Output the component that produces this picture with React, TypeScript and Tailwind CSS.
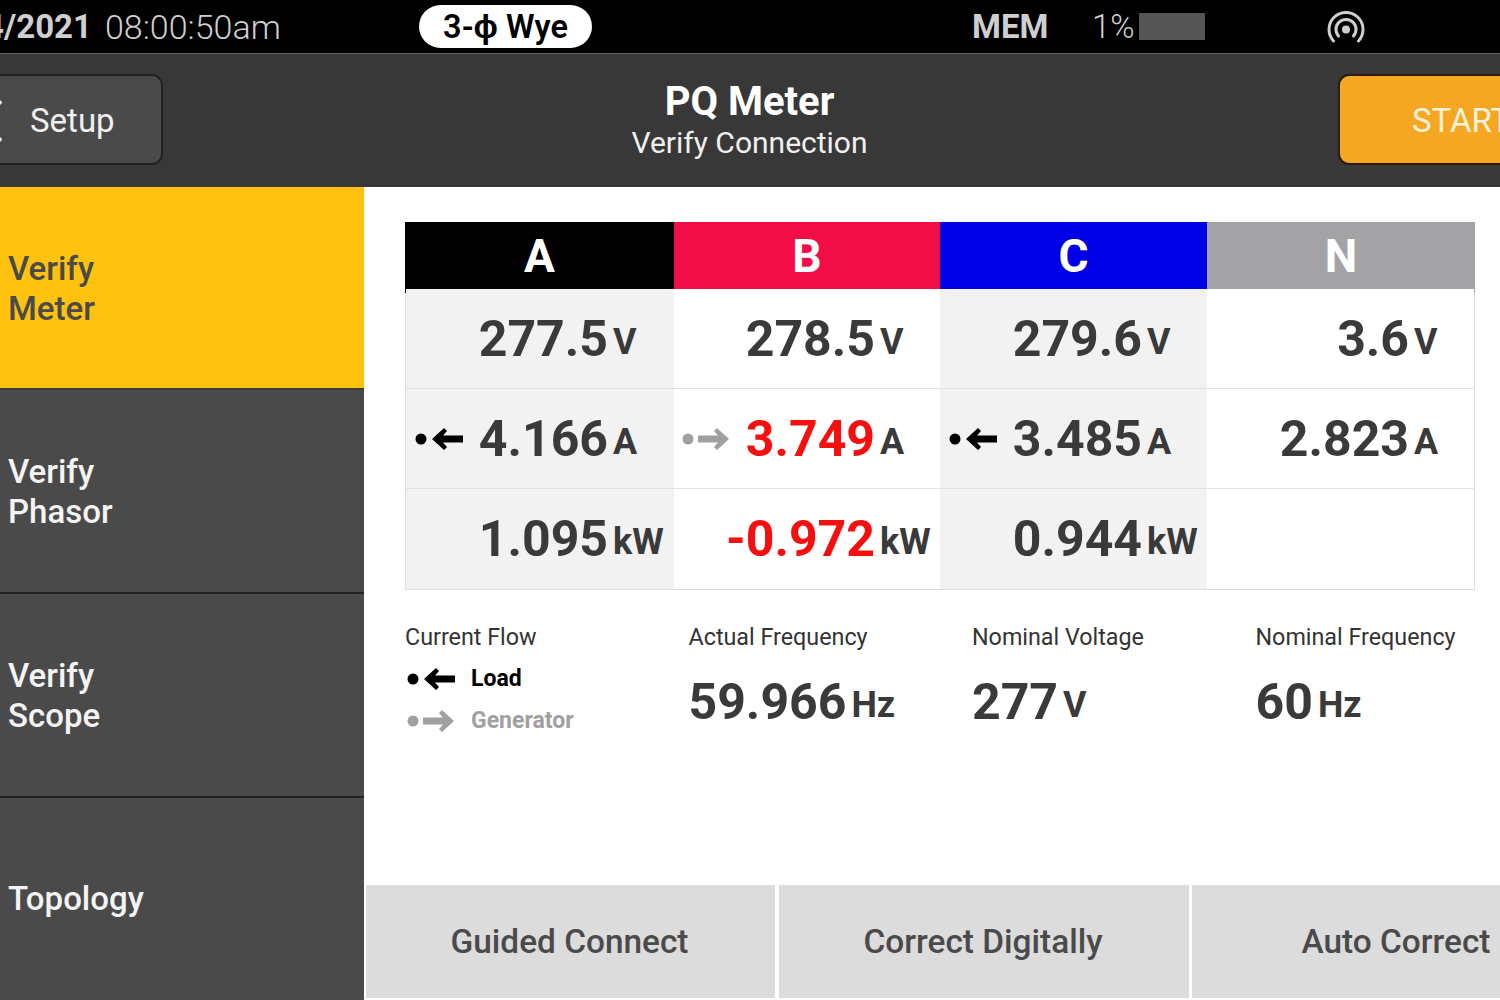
const font = { fontFamily: 'Roboto, sans-serif' }

function Flow({ dir, className = '' }: { dir: 'load' | 'gen'; className?: string }) {
  return (
    <svg viewBox="0 0 48 24" className={`w-[48px] h-[24px] ${className}`} fill="currentColor">
      {dir === 'load' ? (
        <>
          <circle cx="6" cy="12" r="5.5" />
          <path d="M17 12 L29 1 L32 4 L28 8.5 H48 V15.5 H28 L32 20 L29 23 Z" />
        </>
      ) : (
        <>
          <circle cx="6" cy="12" r="5.5" />
          <path d="M47 12 L35 1 L32 4 L36 8.5 H16 V15.5 H36 L32 20 L35 23 Z" />
        </>
      )}
    </svg>
  )
}

function Cell({ value, unit, shade, red, flow, narrow }: { value?: string; unit?: string; shade?: boolean; red?: boolean; flow?: 'load' | 'gen'; narrow?: boolean }) {
  return (
    <div className={`flex items-center h-full ${shade ? 'bg-[#f2f2f2]' : 'bg-white'}`}>
      <div className={`${narrow ? 'w-[201px] pl-[8px]' : 'w-[202px] pl-[9px]'} shrink-0 flex items-center justify-between`}>
        {flow ? <Flow dir={flow} className={flow === 'load' ? 'text-black' : 'text-[#a0a0a0]'} /> : <span />}
        <span className={`text-[50px] leading-none font-bold ${red ? 'text-[#f50f0f]' : 'text-[#3a3a3a]'}`}>{value}</span>
      </div>
      <span className="ml-[5px] mt-[6px] text-[36px] leading-none font-bold text-[#3a3a3a]">{unit}</span>
    </div>
  )
}

function Stat({ label, value, unit }: { label: string; value: string; unit: string }) {
  return (
    <div>
      <div className="text-[23.3px] leading-[28px] text-[#333]">{label}</div>
      <div className="flex items-center mt-[26px]">
        <span className="text-[50px] leading-[50px] font-bold text-[#3a3a3a]">{value}</span>
        <span className="ml-[5px] mt-[6px] text-[36px] leading-none font-bold text-[#3a3a3a]">{unit}</span>
      </div>
    </div>
  )
}

const rows = [
  [
    { value: '277.5', unit: 'V', shade: true },
    { value: '278.5', unit: 'V' },
    { value: '279.6', unit: 'V', shade: true },
    { value: '3.6', unit: 'V' },
  ],
  [
    { value: '4.166', unit: 'A', shade: true, flow: 'load' as const },
    { value: '3.749', unit: 'A', red: true, flow: 'gen' as const },
    { value: '3.485', unit: 'A', shade: true, flow: 'load' as const },
    { value: '2.823', unit: 'A' },
  ],
  [
    { value: '1.095', unit: 'kW', shade: true },
    { value: '-0.972', unit: 'kW', red: true },
    { value: '0.944', unit: 'kW', shade: true },
    {},
  ],
]

const phases = [
  { name: 'A', color: 'bg-black' },
  { name: 'B', color: 'bg-[#f20d47]' },
  { name: 'C', color: 'bg-[#0000e6]' },
  { name: 'N', color: 'bg-[#a3a3a6]' },
]

const sideItems = [
  { label: ['Verify', 'Meter'], h: 'h-[203px]', active: true },
  { label: ['Verify', 'Phasor'], h: 'h-[204px]' },
  { label: ['Verify', 'Scope'], h: 'h-[204px]' },
  { label: ['Topology'], h: 'h-[204px]' },
]

export default function App() {
  return (
    <div className="w-[1500px] h-[1000px] overflow-hidden bg-white flex flex-col" style={font}>
      {/* status bar */}
      <div className="h-[54px] shrink-0 bg-black border-b border-[#666] flex items-center text-[#cfcfcf]">
        <div className="w-[92px] shrink-0 flex justify-end overflow-hidden">
          <span className="text-[33px] font-bold whitespace-nowrap mt-[1px]">04/2021</span>
        </div>
        <span className="ml-[13px] w-[314px] text-[34px] font-light mt-[1px]">08:00:50am</span>
        <span className="w-[173px] h-[43px] pt-[2px] rounded-full bg-white text-black text-[32.5px] font-semibold flex items-center justify-center">3-ϕ Wye</span>
        <span className="ml-[380px] w-[120px] text-[33px] font-bold">MEM</span>
        <span className="w-[47px] text-[33px] font-light">1%</span>
        <span className="w-[66px] h-[27px] bg-[#555]" />
        <svg viewBox="0 0 38 32" className="ml-[122px] w-[38px] h-[32px]" fill="none" stroke="#cfcfcf" strokeWidth="3" strokeLinecap="round">
          <path d="M6.5 30 A17 17 0 1 1 31.5 30" />
          <path d="M11.5 25 A10 10 0 1 1 26.5 25" />
          <circle cx="19" cy="18.5" r="4" fill="#cfcfcf" stroke="none" />
        </svg>
      </div>

      {/* header */}
      <div className="h-[133px] shrink-0 bg-[#383838] flex items-center justify-between">
        <button className="-ml-[30px] -mt-[3px] pt-[3px] w-[193px] h-[91px] rounded-[11px] bg-[#4a4a4a] border-2 border-[#222] flex items-center text-[#f0f0f0] text-[33px]">
          <svg viewBox="0 0 22 44" className="w-[22px] h-[44px] ml-[8px]" fill="none" stroke="#f0f0f0" strokeWidth="4">
            <path d="M21 2 L3 22 L21 42" />
          </svg>
          <span className="ml-[28px]">Setup</span>
        </button>
        <div className="text-center text-white pr-[2px]">
          <div className="text-[40px] leading-[44px] font-bold">PQ Meter</div>
          <div className="text-[30px] leading-[38px] text-[#f0f0f0]">Verify Connection</div>
        </div>
        <button className="-mr-[40px] -mt-[3px] pt-[3px] w-[202px] h-[91px] rounded-[11px] bg-[#f5a623] border-2 border-[#2a1a00] flex items-center text-[#fff3dc] text-[33px] pl-[72px]">
          START
        </button>
      </div>

      <div className="flex-1 flex min-h-0">
        {/* side nav */}
        <div className="w-[364px] shrink-0 flex flex-col">
          {sideItems.map(item => (
            <div key={item.label.join()} className={`${item.h} shrink-0 border-b-2 pl-[8px] flex flex-col justify-center text-[33px] leading-[40px] font-medium ${item.label.length > 1 ? 'pt-[2px]' : ''} ${item.active ? 'bg-[#ffc20e] border-[#3a3a3a] text-[#4a4a4a]' : 'bg-[#4a4a4a] border-[#222] text-[#f4f4f4]'}`}>
              {item.label.map(l => <div key={l}>{l}</div>)}
            </div>
          ))}
        </div>

        <div className="flex-1 min-w-0 flex flex-col">
          <div className="flex-1 pl-[41px] pt-[35px] pr-[25px]">
            <div className="w-[1070px]">
              <div className="grid grid-cols-[269px_266px_267px_268px] h-[66px]">
                {phases.map(p => (
                  <div key={p.name} className={`${p.color} pb-[2px] flex items-center justify-center text-white text-[46px] font-bold`}>{p.name}</div>
                ))}
              </div>
              <div className="border-x border-b border-[#ddd]">
                {rows.map((row, i) => (
                  <div key={i} className={`grid grid-cols-[268px_266px_267px_267px] border-t border-[#e2e2e2] ${i === 2 ? 'h-[101px]' : 'h-[100px]'}`}>
                    {row.map((c, j) => <Cell key={j} narrow={j === 1} {...c} />)}
                  </div>
                ))}
              </div>
            </div>

            <div className="grid grid-cols-4 w-[1134px] mt-[33px]">
              <div>
                <div className="text-[23.3px] leading-[28px] text-[#333]">Current Flow</div>
                <div className="flex items-center mt-[14px] h-[28px] text-black">
                  <Flow dir="load" className="w-[46px] h-[23px] ml-[2px]" />
                  <span className="ml-[16px] text-[23px] font-bold">Load</span>
                </div>
                <div className="flex items-center mt-[14px] h-[28px] text-[#a0a0a0]">
                  <Flow dir="gen" className="w-[46px] h-[23px] ml-[2px]" />
                  <span className="ml-[16px] text-[23px] font-bold">Generator</span>
                </div>
              </div>
              <Stat label="Actual Frequency" value="59.966" unit="Hz" />
              <Stat label="Nominal Voltage" value="277" unit="V" />
              <Stat label="Nominal Frequency" value="60" unit="Hz" />
            </div>
          </div>

          {/* bottom actions */}
          <div className="h-[113px] mb-[2px] shrink-0 ml-[2px] flex text-[33.4px] font-medium text-[#4a4a4a]">
            <button className="w-[409px] shrink-0 pt-[2px] pr-[2px] bg-[#dcdcdc]">Guided Connect</button>
            <button className="ml-[4px] w-[410px] shrink-0 pt-[2px] pr-[2px] bg-[#dcdcdc]">Correct Digitally</button>
            <button className="ml-[3px] w-[410px] shrink-0 pt-[2px] pr-[2px] bg-[#dcdcdc]">Auto Correct</button>
          </div>
        </div>
      </div>
    </div>
  )
}
